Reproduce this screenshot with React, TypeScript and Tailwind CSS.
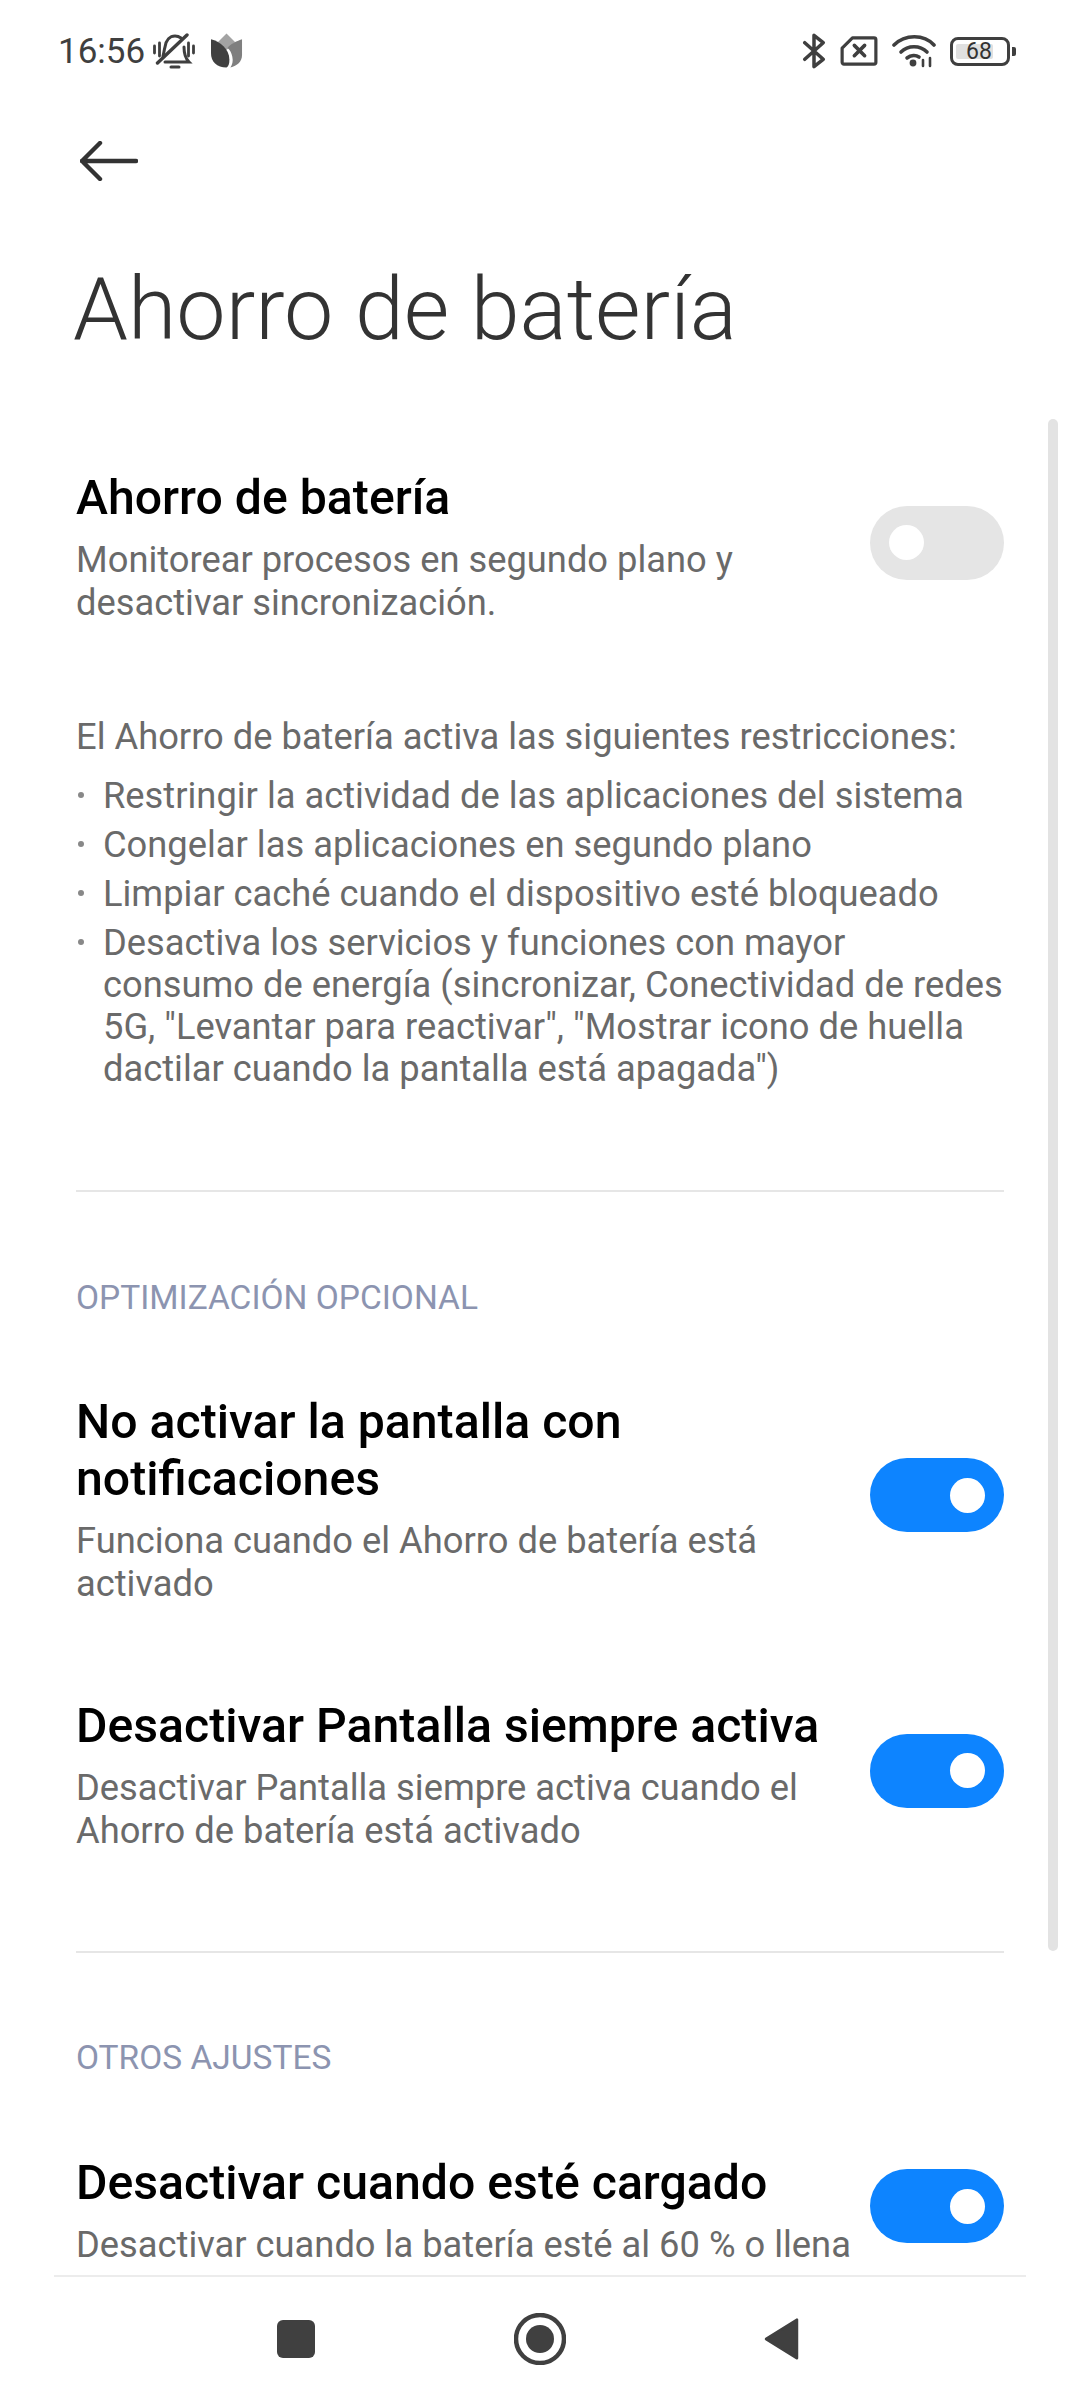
function Toggle({ on }: { on: boolean }) {
  return (
    <div
      className={`mb-[8px] flex h-[74px] w-[134px] shrink-0 items-center rounded-full px-[19px] ${
        on ? "justify-end bg-[#0d84ff]" : "justify-start bg-[#e5e5e5]"
      }`}
    >
      <div className="h-[35px] w-[35px] rounded-full bg-white" />
    </div>
  );
}

function SettingRow({
  title,
  desc,
  className,
}: {
  title: string[];
  desc: string[];
  className?: string;
}) {
  return (
    <div className={`flex items-center justify-between ${className ?? ""}`}>
      <div className="w-[790px]">
        {title.map((t) => (
          <div key={t} className="text-[48.2px] leading-[57px] font-medium text-black">
            {t}
          </div>
        ))}
        <div className="mt-[12px]">
          {desc.map((d) => (
            <div key={d} className="text-[36.3px] leading-[43px] text-[#6a6a6a]">
              {d}
            </div>
          ))}
        </div>
      </div>
      <Toggle on />
    </div>
  );
}

function Bullet({ lines }: { lines: string[] }) {
  return (
    <div className="relative pl-[27px] text-[36.3px] leading-[42px] text-[#6a6a6a]">
      <span className="absolute top-[17px] left-[2px] h-[6px] w-[6px] rounded-full bg-[#888888]" />
      {lines.map((l) => (
        <div key={l}>{l}</div>
      ))}
    </div>
  );
}

function StatusBar() {
  return (
    <div className="flex h-[102px] items-center justify-between pr-[64px] pl-[58px] text-[#3f3f3f]">
      <div className="flex items-center">
        <span className="text-[35px] leading-none">16:56</span>
        <svg width="42" height="36" viewBox="0 0 42 36" className="ml-[8px]" fill="none" stroke="#3f3f3f">
          <path d="M1.5 13v7M6.5 10v13M35.5 10v13M40.5 13v7" strokeWidth="2.8" strokeLinecap="round" />
          <path d="M10 23c1-3 1-6 2-9 1-7 5-11 10-11 2 0 4 .5 6 2M31 14c0 6 1 11 5 15H12" strokeWidth="3" strokeLinecap="round" />
          <path d="M18 34h8" strokeWidth="3" strokeLinecap="round" />
          <path d="M4.5 30L34 2" strokeWidth="3.4" strokeLinecap="round" />
        </svg>
        <svg width="33" height="36" viewBox="0 0 34 36" className="ml-[15px]">
          <path d="M17 0l9 9-9 8-9-8z" fill="#a3a3a3" />
          <path d="M1 6c9 2 19 10 19 21 0 4-1 7-3 8C7 35 1 29 1 20z" fill="#404040" />
          <path d="M33 6v16c0 7-5 11-12 13 2-3 3-6 2-11-1-4-2-7-5-9 3-4 9-7 15-9z" fill="#7f7f7f" />
        </svg>
      </div>
      <div className="flex items-center">
        <svg width="24" height="36" viewBox="0 0 26 38" fill="none" stroke="#3f3f3f" strokeWidth="3.8" strokeLinecap="round" strokeLinejoin="round">
          <path d="M3 10l20 18-10 8V2l10 8L3 28" />
        </svg>
        <svg width="38" height="30" viewBox="0 0 40 32" className="ml-[14px]" fill="none" stroke="#3f3f3f" strokeLinecap="round" strokeLinejoin="round">
          <path d="M2 13L13 2h23a2 2 0 0 1 2 2v24a2 2 0 0 1-2 2H4a2 2 0 0 1-2-2z" strokeWidth="3.4" />
          <path d="M15 10l11 11M26 10L15 21" strokeWidth="3.8" />
        </svg>
        <svg width="44" height="34" viewBox="0 0 44 34" className="ml-[14px]" fill="none" stroke="#3f3f3f" strokeLinecap="round">
          <path d="M2 11c11-11 30-11 40 0" strokeWidth="3.6" />
          <path d="M9 18c7-7 19-7 26 0" strokeWidth="3.6" />
          <path d="M15 24c4-3 9-3 12-1" strokeWidth="3.6" />
          <circle cx="21" cy="29" r="3.4" fill="#3f3f3f" stroke="none" />
          <path d="M31 26v6M38 24v8" strokeWidth="2.6" />
        </svg>
        <div className="relative ml-[14px] flex h-[29px] w-[60px] items-center rounded-[8px] border-[3px] border-[#3f3f3f] pl-[3px]">
          <div className="h-[15px] w-[37px] rounded-[2px] bg-[#e0e0e0]" />
          <span className="absolute left-[13px] text-[23px] leading-none text-[#333333]">68</span>
        </div>
        <div className="ml-[2px] h-[9px] w-[4px] rounded-r-[2px] bg-[#3f3f3f]" />
      </div>
    </div>
  );
}

export default function App() {
  return (
    <div
      className="relative flex h-[2400px] w-[1080px] flex-col overflow-hidden bg-white"
      style={{ fontFamily: "Roboto, sans-serif" }}
    >
      <StatusBar />

      <div className="pl-[80px]">
        <svg width="58" height="40" viewBox="0 0 58 40" className="mt-[39px] block" fill="none" stroke="#333333" strokeWidth="4.4" strokeLinecap="round" strokeLinejoin="round">
          <path d="M20 2L2 20l18 18M2 20h54" />
        </svg>
      </div>
      <h1 className="mt-[73px] pl-[73px] text-[88px] leading-[110px] font-light text-[#333333]">Ahorro de batería</h1>

      <div className="min-h-0 flex-1 overflow-hidden px-[76px] pt-[105px]">
        <div className="flex items-center justify-between">
          <div>
            <div className="text-[48.2px] leading-[57px] font-medium text-black">Ahorro de batería</div>
            <div className="mt-[12px] text-[36.3px] leading-[43px] text-[#6a6a6a]">
              <div>Monitorear procesos en segundo plano y</div>
              <div>desactivar sincronización.</div>
            </div>
          </div>
          <Toggle on={false} />
        </div>

        <div className="mt-[91px] text-[36.3px] leading-[43px] text-[#6a6a6a]">
          El Ahorro de batería activa las siguientes restricciones:
        </div>
        <div className="mt-[17px] flex flex-col gap-[7px]">
          <Bullet lines={["Restringir la actividad de las aplicaciones del sistema"]} />
          <Bullet lines={["Congelar las aplicaciones en segundo plano"]} />
          <Bullet lines={["Limpiar caché cuando el dispositivo esté bloqueado"]} />
          <Bullet
            lines={[
              "Desactiva los servicios y funciones con mayor",
              "consumo de energía (sincronizar, Conectividad de redes",
              "5G, \"Levantar para reactivar\", \"Mostrar icono de huella",
              "dactilar cuando la pantalla está apagada\")",
            ]}
          />
        </div>

        <div className="mt-[100px] h-[2px] bg-[#e6e6e6]" />
        <div className="mt-[85px] text-[33.5px] leading-[42px] text-[#8c94b0]">OPTIMIZACIÓN OPCIONAL</div>

        <SettingRow
          className="mt-[74px]"
          title={["No activar la pantalla con", "notificaciones"]}
          desc={["Funciona cuando el Ahorro de batería está", "activado"]}
        />
        <SettingRow
          className="mt-[92px]"
          title={["Desactivar Pantalla siempre activa"]}
          desc={["Desactivar Pantalla siempre activa cuando el", "Ahorro de batería está activado"]}
        />

        <div className="mt-[99px] h-[2px] bg-[#e6e6e6]" />
        <div className="mt-[84px] text-[33.5px] leading-[42px] text-[#8c94b0]">OTROS AJUSTES</div>

        <SettingRow
          className="mt-[75px]"
          title={["Desactivar cuando esté cargado"]}
          desc={["Desactivar cuando la batería esté al 60 % o llena"]}
        />
      </div>

      <div className="absolute top-[419px] right-[22px] h-[1532px] w-[10px] rounded-full bg-[#e3e3e3]" />

      <div className="mx-[54px] flex h-[125px] shrink-0 items-center justify-center border-t-2 border-[#ececec] bg-white">
        <div className="mr-[3px] flex items-center">
          <div className="h-[38px] w-[38px] rounded-[6px] bg-[#404040]" />
          <svg width="52" height="52" viewBox="0 0 52 52" className="ml-[199px]">
            <circle cx="26" cy="26" r="24" fill="none" stroke="#404040" strokeWidth="4.5" />
            <circle cx="26" cy="26" r="14" fill="#404040" />
          </svg>
          <svg width="37" height="44" viewBox="0 0 38 46" className="ml-[197px]">
            <path d="M35 3v40L3 23z" fill="#404040" stroke="#404040" strokeWidth="3" strokeLinejoin="round" />
          </svg>
        </div>
      </div>
    </div>
  );
}
